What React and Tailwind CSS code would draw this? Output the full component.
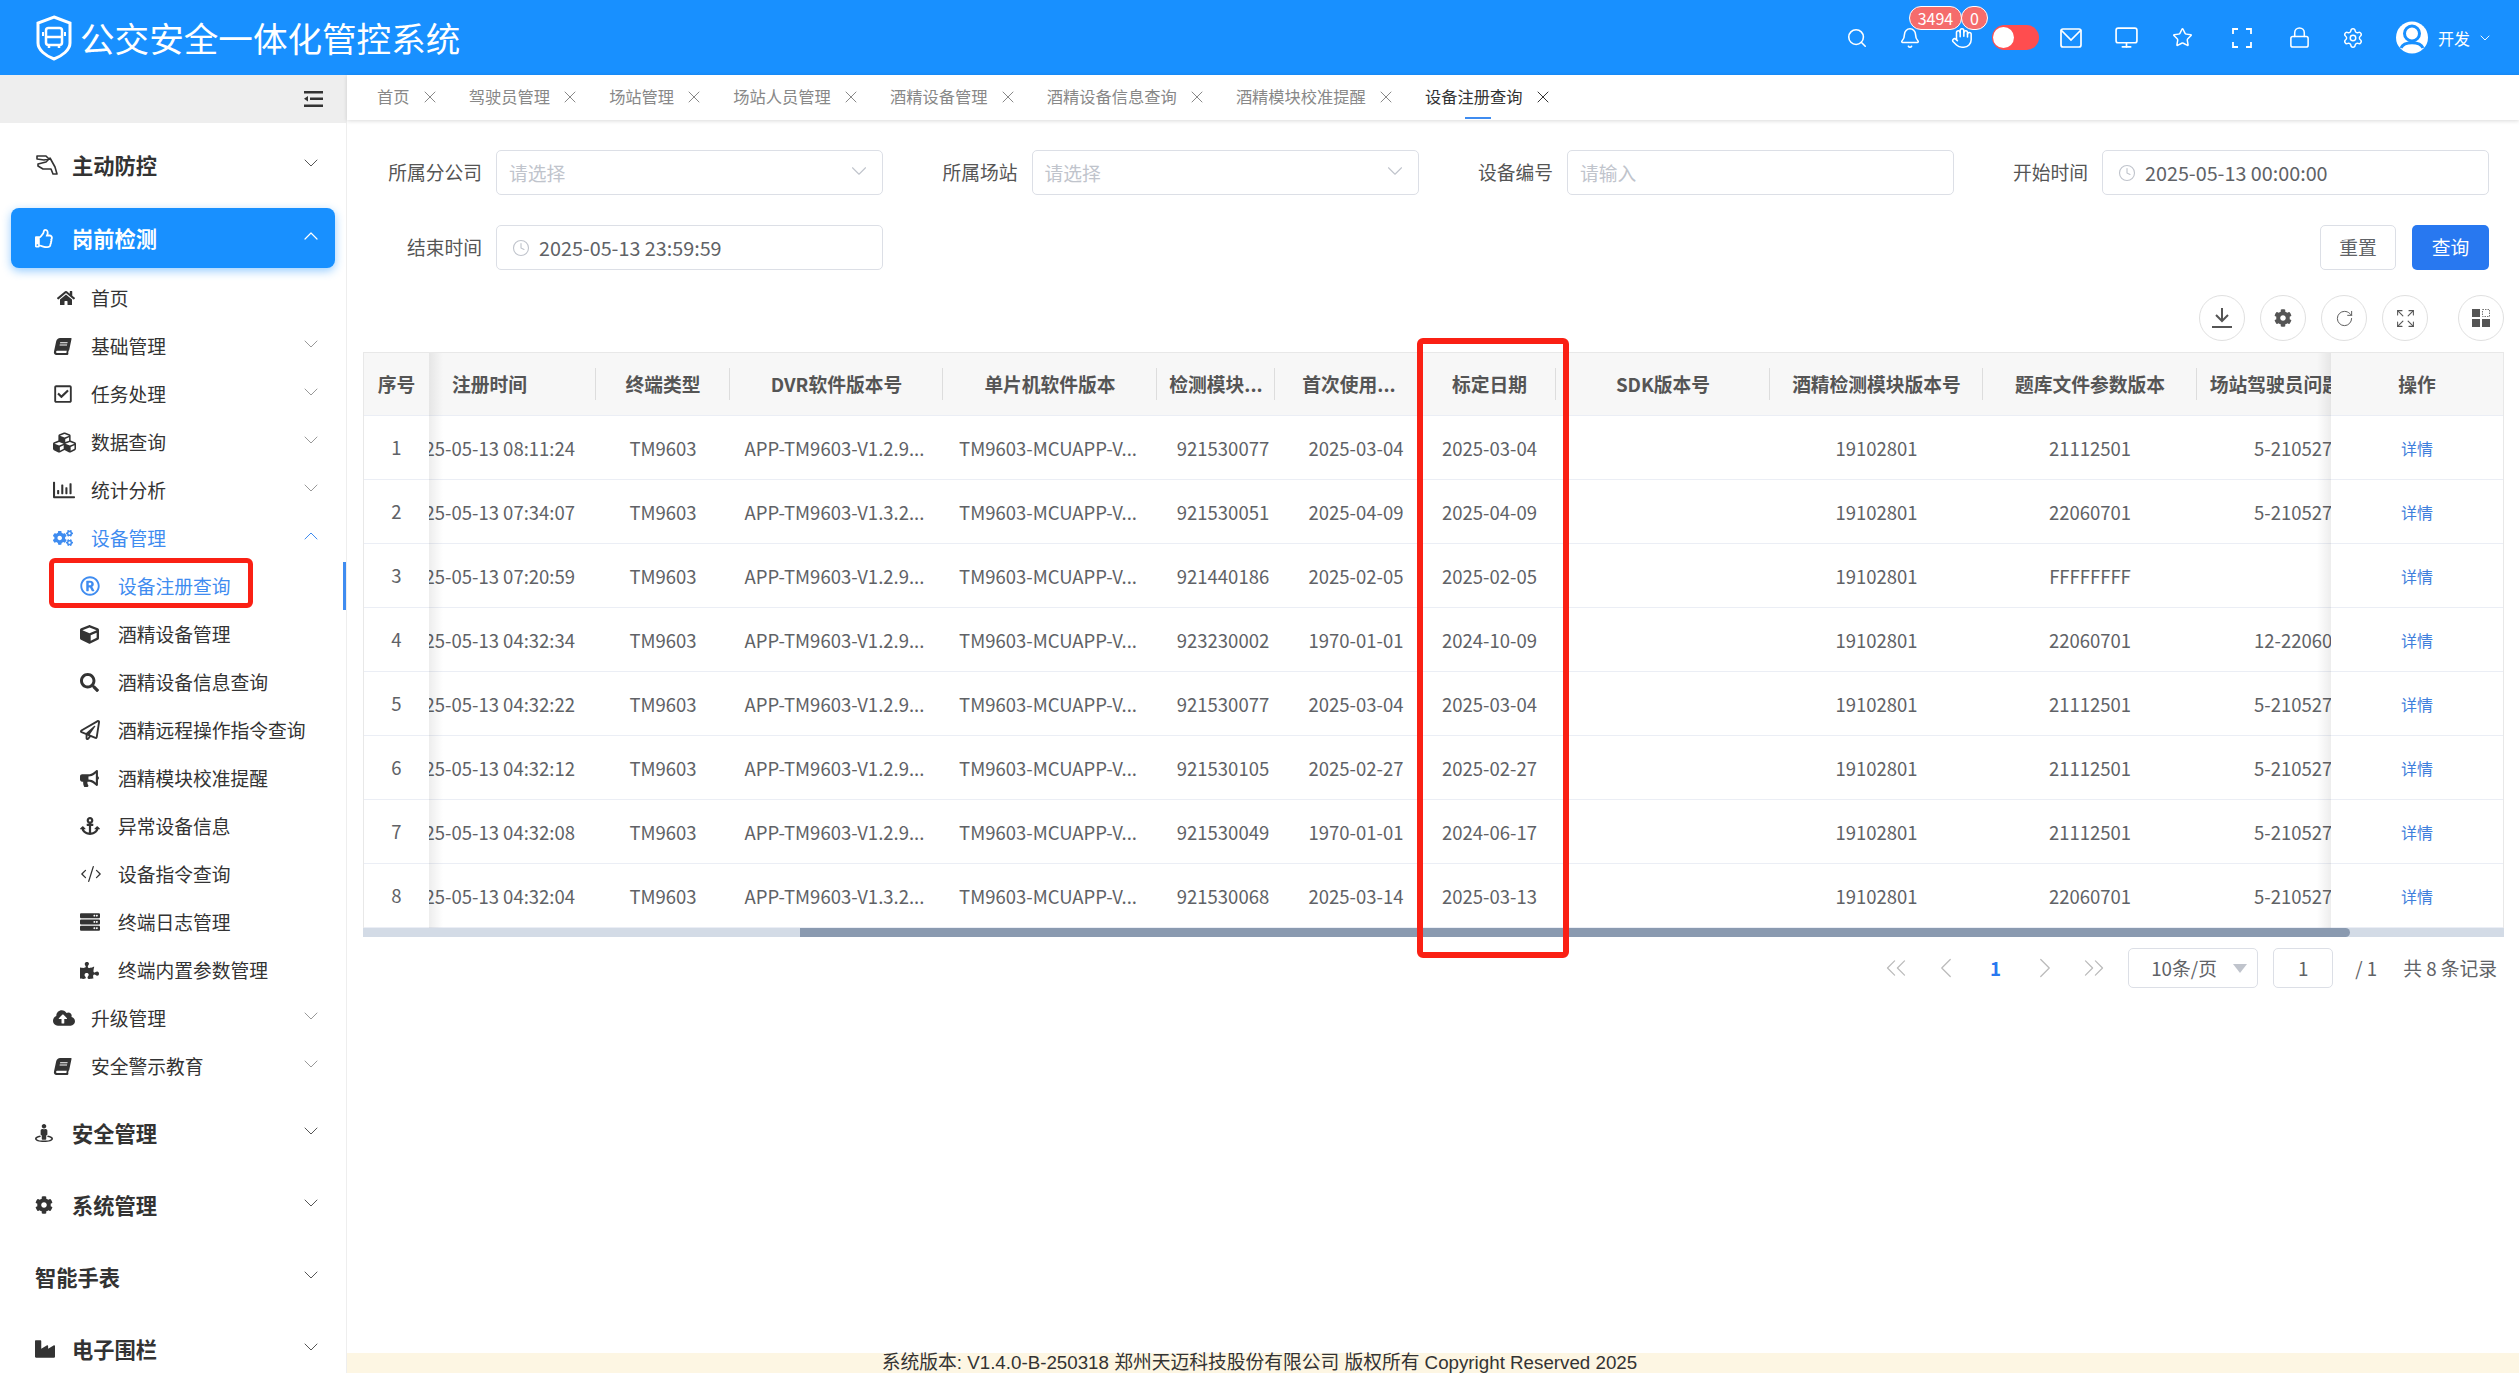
import React from 'react'
import {
  Search, Bell, Hand, Monitor, Star, Lock, Settings, ChevronDown, ChevronUp, X, Clock,
  RotateCw, Expand, ChevronsLeft, ChevronsRight, ChevronLeft, ChevronRight, CodeXml,
} from 'lucide-react'
import {
  FaHome, FaBook, FaRegCheckSquare, FaCubes, FaRegChartBar, FaCogs, FaRegRegistered, FaCube, FaSearch,
  FaRegPaperPlane, FaBullhorn, FaAnchor, FaServer, FaPuzzlePiece, FaCloudUploadAlt, FaIndustry,
  FaCog, FaStreetView, FaRegThumbsUp,
} from 'react-icons/fa'

const tabs = ['首页', '驾驶员管理', '场站管理', '场站人员管理', '酒精设备管理', '酒精设备信息查询', '酒精模块校准提醒', '设备注册查询']

const subMenu = [
  { icon: <FaHome size={18} className="ml-[4px]" />, label: '首页', level: 2, noArrow: true },
  { icon: <FaBook size={17} className="-skew-x-12 ml-[1px]" />, label: '基础管理', level: 2 },
  { icon: <FaRegCheckSquare size={20} />, label: '任务处理', level: 2 },
  { icon: <FaCubes size={23} />, label: '数据查询', level: 2 },
  { icon: <FaRegChartBar size={22} />, label: '统计分析', level: 2 },
  { icon: <FaCogs size={20} />, label: '设备管理', level: 2, open: true },
  { icon: <FaRegRegistered size={20} />, label: '设备注册查询', level: 3, active: true },
  { icon: <FaCube size={19} />, label: '酒精设备管理', level: 3 },
  { icon: <FaSearch size={19} />, label: '酒精设备信息查询', level: 3 },
  { icon: <FaRegPaperPlane size={20} />, label: '酒精远程操作指令查询', level: 3 },
  { icon: <FaBullhorn size={19} />, label: '酒精模块校准提醒', level: 3 },
  { icon: <FaAnchor size={20} />, label: '异常设备信息', level: 3 },
  { icon: <CodeXml size={22} strokeWidth={1.4} />, label: '设备指令查询', level: 3 },
  { icon: <FaServer size={20} />, label: '终端日志管理', level: 3 },
  { icon: <FaPuzzlePiece size={19} />, label: '终端内置参数管理', level: 3 },
  { icon: <FaCloudUploadAlt size={22} />, label: '升级管理', level: 2 },
  { icon: <FaBook size={17} className="-skew-x-12 ml-[1px]" />, label: '安全警示教育', level: 2 },
]

const headers = ['注册时间', '终端类型', 'DVR软件版本号', '单片机软件版本', '检测模块...', '首次使用...', '标定日期', 'SDK版本号', '酒精检测模块版本号', '题库文件参数版本', '场站驾驶员问题库版本']

const rows = [
  ['08:11:24', 'V1.2.9', '921530077', '2025-03-04', '2025-03-04', '21112501', '5-21052701'],
  ['07:34:07', 'V1.3.2', '921530051', '2025-04-09', '2025-04-09', '22060701', '5-21052701'],
  ['07:20:59', 'V1.2.9', '921440186', '2025-02-05', '2025-02-05', 'FFFFFFFF', ''],
  ['04:32:34', 'V1.2.9', '923230002', '1970-01-01', '2024-10-09', '22060701', '12-2206070'],
  ['04:32:22', 'V1.2.9', '921530077', '2025-03-04', '2025-03-04', '21112501', '5-21052701'],
  ['04:32:12', 'V1.2.9', '921530105', '2025-02-27', '2025-02-27', '21112501', '5-21052701'],
  ['04:32:08', 'V1.2.9', '921530049', '1970-01-01', '2024-06-17', '21112501', '5-21052701'],
  ['04:32:04', 'V1.3.2', '921530068', '2025-03-14', '2025-03-13', '22060701', '5-21052701'],
]

const gridCols = 'grid grid-cols-[213px_134px_213px_214px_118px_148px_133px_214px_213px_214px_213px] w-[2027px]'

const Logo = () => (
  <svg width="36" height="46" viewBox="0 0 36 46" fill="none" stroke="white" strokeWidth="3">
    <path d="M18 2 L34 8 V28 C34 35 26 41 18 44 C10 41 2 35 2 28 V8 Z" />
    <rect x="10" y="13" width="16" height="17" rx="2.5" strokeWidth="2.5" />
    <path d="M10 22 H26 M13 33 V30 M23 33 V30" strokeWidth="2.5" />
    <path d="M7 17 V21 M29 17 V21" strokeWidth="2" />
  </svg>
)

const PreventIcon = () => (
  <svg width="24" height="22" viewBox="0 0 24 22" fill="none" stroke="#333" strokeWidth="1.6" strokeLinejoin="round">
    <path d="M2 2 H11 L14 5 L9 6 L2 5 Z" />
    <path d="M3 10 L11 8 L15 4 L20 13 L22 20 H18 L16 15 H8 L3 12 Z" />
  </svg>
)

const MailIcon = () => (
  <svg width="24" height="22" viewBox="0 0 24 22" fill="none" stroke="white" strokeWidth="1.7">
    <rect x="2" y="2" width="20" height="18" rx="2" />
    <path d="M2 3 L12 13 L22 3" />
  </svg>
)

const FullIcon = () => (
  <svg width="20" height="20" viewBox="0 0 20 20" fill="none" stroke="white" strokeWidth="1.8">
    <path d="M1 6 V1 H6 M14 1 H19 V6 M19 14 V19 H14 M6 19 H1 V14" />
  </svg>
)

const AvatarIcon = () => (
  <svg width="32" height="33" viewBox="0 0 32 33">
    <circle cx="16" cy="16.5" r="16" fill="white" />
    <circle cx="16" cy="12.5" r="7.5" fill="none" stroke="#1890ff" strokeWidth="3" />
    <path d="M5 27 C8 20 24 20 27 27" fill="none" stroke="#1890ff" strokeWidth="3" />
  </svg>
)

const DownloadIcon = () => (
  <svg width="20" height="20" viewBox="0 0 20 20" fill="none" stroke="#555" strokeWidth="2">
    <path d="M10 0 V12 M4 7 L10 13 L16 7" />
    <path d="M0 19 H20" />
  </svg>
)

const LayoutIcon = () => (
  <svg width="18" height="18" viewBox="0 0 18 18" fill="#555">
    <rect x="0" y="0" width="8" height="8" />
    <rect x="10.5" y="0.5" width="7" height="7" fill="none" stroke="#777" strokeDasharray="1.5 1" />
    <rect x="0" y="10" width="8" height="8" />
    <rect x="10" y="10" width="8" height="8" />
  </svg>
)

const CollapseIcon = () => (
  <svg width="19" height="16" viewBox="0 0 19 16" fill="#333">
    <rect x="0" y="0" width="19" height="2.5" />
    <rect x="6" y="6.5" width="13" height="2.5" />
    <rect x="0" y="13.5" width="19" height="2.5" />
    <path d="M4 5 V10.5 L0 7.7 Z" />
  </svg>
)

const Group = ({ icon, label, active, open }) => (
  <div className="h-[72px] flex items-center">
    <div className={`w-[324px] ml-[11px] h-[60px] rounded-lg flex items-center pl-[24px] pr-[12px] ${active ? 'bg-[#1890ff] text-white shadow-[0_3px_10px_rgba(24,144,255,0.45)]' : 'text-[#333]'}`}>
      {icon && <span className="w-[37px] shrink-0 flex items-center">{icon}</span>}
      <span className="text-[21.25px] font-bold leading-none">{label}</span>
      {open
        ? <ChevronUp className="ml-auto -mt-1" size={24} strokeWidth={1.2} />
        : <ChevronDown className="ml-auto -mt-1 text-[#555]" size={24} strokeWidth={1} />}
    </div>
  </div>
)

const SubItem = ({ item }) => {
  const color = item.active || item.open ? 'text-[#3f8cf0]' : 'text-[#333]'
  const pad = item.level === 3 ? 'pl-[80px]' : 'pl-[53px]'
  return (
    <div className={`h-[48px] relative flex items-center pr-[23px] ${pad} ${color}`}>
      <span className="w-[38px] shrink-0 flex items-center">{item.icon}</span>
      <span className="text-[18.75px] leading-none whitespace-nowrap">{item.label}</span>
      {item.level === 2 && !item.noArrow && (item.open
        ? <ChevronUp className="ml-auto -mt-1 text-[#3f8cf0]" size={24} strokeWidth={1} />
        : <ChevronDown className="ml-auto -mt-1 text-[#999]" size={24} strokeWidth={1} />)}
      {item.active && (
        <>
          <div className="absolute right-0 top-0 bottom-0 w-[3px] bg-[#3f8cf0]" />
          <div className="absolute left-[49px] top-[-4px] w-[204px] h-[50px] border-[5px] border-[#fa2014] rounded-[6px]" />
        </>
      )}
    </div>
  )
}

const Field = ({ label, children }) => (
  <div className="flex items-center w-[535.5px]">
    <div className="w-[133px] shrink-0 text-right pr-[14px] text-[18.75px] text-[#555] leading-none whitespace-nowrap">{label}</div>
    {children}
  </div>
)

const Box = ({ children }) => (
  <div className="w-[387px] shrink-0 h-[45px] border border-[#dcdfe6] rounded-[5px] flex items-center px-[12px] bg-white">
    {children}
  </div>
)

const Select = () => (
  <Box>
    <span className="text-[#c0c4cc] text-[18.75px] mt-[2px]">请选择</span>
    <ChevronDown className="ml-auto -mt-1 -mr-[2px] text-[#c0c4cc]" size={26} strokeWidth={1} />
  </Box>
)

const DateBox = ({ value }) => (
  <Box>
    <Clock className="text-[#c0c4cc] ml-[3px] mr-[9px]" size={18} strokeWidth={1.5} />
    <span className="text-[#606266] text-[19.75px]">{value}</span>
  </Box>
)

const ToolBtn = ({ children, className = '' }) => (
  <div className={`w-[46px] h-[46px] rounded-full border border-[#e0e0e0] flex items-center justify-center ${className}`}>{children}</div>
)

const HeadCell = ({ children, sep = true }) => (
  <div className="h-[63px] relative flex items-center justify-center whitespace-nowrap overflow-hidden text-[18.75px] font-bold text-[#555]">
    {children}
    {sep && <div className="absolute right-0 top-[15px] h-[32px] w-px bg-[#ddd]" />}
  </div>
)

const Cell = ({ children, className = '' }) => (
  <div className={`h-[64px] pt-px flex items-center justify-center whitespace-nowrap overflow-hidden text-[18.5px] text-[#606266] ${className}`}>{children}</div>
)

export default function App() {
  return (
    <div className="w-[2519px] h-[1373px] overflow-hidden flex flex-col bg-white font-['Noto_Sans_CJK_SC','Noto_Sans',sans-serif]">
      {/* header */}
      <header className="h-[75px] shrink-0 bg-[#1890ff] flex items-center text-white pl-[36px] pr-[26px]">
        <Logo />
        <span className="ml-[8px] text-[34.6px] leading-none">公交安全一体化管控系统</span>
        <div className="ml-auto flex items-center">
          <div className="w-[54px] flex justify-center"><Search size={22} strokeWidth={1.7} /></div>
          <div className="w-[52px] flex justify-center relative">
            <Bell size={22} strokeWidth={1.7} />
            <span className="absolute left-[25px] top-[-21px] w-[53px] h-[24px] rounded-full bg-[#f56c6c] border border-white text-[16px] leading-none flex items-center justify-center">3494</span>
          </div>
          <div className="w-[52px] flex justify-center relative">
            <Hand size={22} strokeWidth={1.7} />
            <span className="absolute left-[25px] top-[-21px] w-[27px] h-[24px] rounded-full bg-[#f56c6c] border border-white text-[16px] leading-none flex items-center justify-center">0</span>
          </div>
          <div className="w-[56px] flex justify-center">
            <div className="w-[47px] h-[25px] rounded-full bg-[#ff4d4f] flex items-center pl-[1px]">
              <div className="w-[21px] h-[21px] rounded-full bg-white" />
            </div>
          </div>
          <div className="w-[55px] flex justify-center"><MailIcon /></div>
          <div className="w-[55px] flex justify-center"><Monitor size={25} strokeWidth={1.6} /></div>
          <div className="w-[57px] flex justify-center"><Star size={21} strokeWidth={1.7} /></div>
          <div className="w-[62px] flex justify-center"><FullIcon /></div>
          <div className="w-[53px] flex justify-center"><Lock size={23} strokeWidth={1.6} /></div>
          <div className="w-[54px] flex justify-center"><Settings size={22} strokeWidth={1.6} /></div>
          <div className="w-[52px] ml-[6px] flex justify-center"><AvatarIcon /></div>
          <span className="text-[16px] leading-none">开发</span>
          <ChevronDown className="ml-[7px]" size={16} strokeWidth={1.4} />
        </div>
      </header>

      <div className="flex-1 flex min-h-0">
        {/* sidebar */}
        <aside className="w-[347px] shrink-0 border-r border-[#eeeeee] bg-white overflow-hidden">
          <div className="h-[48px] bg-[#eeeeee] flex items-center justify-end pr-[23px]">
            <CollapseIcon />
          </div>
          <div className="pt-[6px]">
            <Group icon={<PreventIcon />} label="主动防控" />
            <div className="mt-px">
              <Group icon={<FaRegThumbsUp size={19} />} label="岗前检测" active open />
            </div>
            <div className="mb-[7px]">
              {subMenu.map((item) => <SubItem key={item.label} item={item} />)}
            </div>
            <Group icon={<FaStreetView size={18} />} label="安全管理" />
            <Group icon={<FaCog size={18} />} label="系统管理" />
            <Group label="智能手表" />
            <Group icon={<FaIndustry size={20} />} label="电子围栏" />
          </div>
        </aside>

        {/* main */}
        <main className="flex-1 min-w-0 flex flex-col">
          {/* tabs */}
          <div className="h-[45px] shrink-0 bg-white shadow-[0_1px_4px_rgba(0,0,0,0.15)] flex items-center pl-[30px] gap-[29.2px] text-[16.25px] text-[#888]">
            {tabs.map((t, i) => (
              <div key={t} className={`relative h-full flex items-center gap-[10px] pb-[2px] ${i === tabs.length - 1 ? 'text-[#333]' : ''}`}>
                <span className="leading-none">{t}</span>
                <X size={20} strokeWidth={1.2} />
                {i === tabs.length - 1 && <div className="absolute bottom-[1px] left-[40px] w-[26px] h-[2px] bg-[#3f8cf0]" />}
              </div>
            ))}
          </div>

          <div className="flex-1 min-h-0 relative pl-[16px] pr-[15px]">
            {/* filters */}
            <div className="pr-[15px]">
              <div className="flex pt-[30px]">
                <Field label="所属分公司"><Select /></Field>
                <Field label="所属场站"><Select /></Field>
                <Field label="设备编号"><Box><span className="text-[#c0c4cc] text-[18.75px] mt-[2px]">请输入</span></Box></Field>
                <div className="flex items-center ml-auto">
                  <div className="pr-[14px] text-[18.75px] text-[#555] leading-none whitespace-nowrap">开始时间</div>
                  <DateBox value="2025-05-13 00:00:00" />
                </div>
              </div>
              <div className="flex items-center mt-[30px]">
                <Field label="结束时间"><DateBox value="2025-05-13 23:59:59" /></Field>
                <div className="ml-auto flex gap-[16px] text-[18.75px]">
                  <div className="w-[76px] h-[45px] border border-[#dcdfe6] rounded-[5px] text-[#606266] flex items-center justify-center">重置</div>
                  <div className="w-[77px] h-[45px] bg-[#2878f0] rounded-[5px] text-white flex items-center justify-center">查询</div>
                </div>
              </div>
            </div>

            {/* tool buttons */}
            <div className="flex justify-end items-center mt-[25px] mb-[11px]">
              <ToolBtn><DownloadIcon /></ToolBtn>
              <ToolBtn className="ml-[15px]"><FaCog size={18} color="#555" /></ToolBtn>
              <ToolBtn className="ml-[15px]"><RotateCw size={19} strokeWidth={1.2} color="#555" /></ToolBtn>
              <ToolBtn className="ml-[15px]"><Expand size={21} strokeWidth={1.2} color="#555" /></ToolBtn>
              <ToolBtn className="ml-[30px]"><LayoutIcon /></ToolBtn>
            </div>

            {/* table */}
            <div className="relative border-t border-[#e8e8e8]">
              <div className="flex w-full">
                {/* fixed left */}
                <div className="w-[66px] shrink-0 relative z-10 bg-white border-l border-[#e8e8e8]">
                  <div className="h-[63px] bg-[#f7f7f7] flex items-center justify-center border-b border-[#ebeef5] text-[18.75px] font-bold text-[#555]">序号</div>
                  {rows.map((_, i) => (
                    <div key={i} className="h-[64px] pt-px flex items-center justify-center border-b border-[#ebeef5] text-[18.5px] text-[#606266]">{i + 1}</div>
                  ))}
                  <div className="absolute top-0 bottom-0 left-full w-[14px] bg-gradient-to-r from-[rgba(0,0,0,0.07)] to-transparent" />
                </div>

                {/* scrolling columns */}
                <div className="flex-1 min-w-0 overflow-hidden">
                  <div className="-ml-[46px] w-[2027px]">
                    <div className={`${gridCols} bg-[#f7f7f7] border-b border-[#ebeef5] h-[63px]`}>
                      {headers.map((h, i) => <HeadCell key={h} sep={i < headers.length - 1}>{h}</HeadCell>)}
                    </div>
                    {rows.map((r, i) => (
                      <div key={i} className={`${gridCols} border-b border-[#ebeef5] h-[64px]`}>
                        <Cell>2025-05-13 {r[0]}</Cell>
                        <Cell>TM9603</Cell>
                        <Cell className="pr-[4px]">APP-TM9603-{r[1]}...</Cell>
                        <Cell className="pr-[4px]">TM9603-MCUAPP-V...</Cell>
                        <Cell className="pl-[14px]">{r[2]}</Cell>
                        <Cell className="pl-[14px]">{r[3]}</Cell>
                        <Cell>{r[4]}</Cell>
                        <Cell />
                        <Cell>19102801</Cell>
                        <Cell>{r[5]}</Cell>
                        <Cell>{r[6]}</Cell>
                      </div>
                    ))}
                  </div>
                </div>

                {/* fixed right */}
                <div className="w-[173px] shrink-0 relative z-10 bg-white border-r border-[#e8e8e8]">
                  <div className="absolute top-0 bottom-0 right-full w-[14px] bg-gradient-to-l from-[rgba(0,0,0,0.07)] to-transparent" />
                  <div className="h-[63px] bg-[#f7f7f7] flex items-center justify-center border-b border-[#ebeef5] text-[18.75px] font-bold text-[#555]">操作</div>
                  {rows.map((_, i) => (
                    <div key={i} className="h-[64px] flex items-center justify-center border-b border-[#ebeef5] text-[16px] text-[#3f7fdc]">详情</div>
                  ))}
                </div>
              </div>

              {/* scrollbar */}
              <div className="h-[9px] bg-[#d3dbe6] relative z-20">
                <div className="h-full ml-[437px] w-[1550px] bg-[#8a9ab0] rounded-r-full" />
              </div>

              {/* red annotation over the date column */}
              <div className="absolute z-30 left-[1054px] top-[-15px] w-[152px] h-[620px] border-[6px] border-[#fa2014] rounded-[6px]" />
            </div>

            {/* pagination */}
            <div className="flex justify-end items-center mt-[11px] h-[40px] text-[#606266] text-[18.75px]">
              <div className="w-[49.5px] flex justify-center"><ChevronsLeft size={34} strokeWidth={0.9} className="text-[#bbb]" /></div>
              <div className="w-[49.5px] flex justify-center"><ChevronLeft size={34} strokeWidth={0.9} className="text-[#bbb]" /></div>
              <div className="w-[49.5px] flex justify-center text-[#2878f0] font-bold">1</div>
              <div className="w-[49.5px] flex justify-center"><ChevronRight size={34} strokeWidth={0.9} className="text-[#bbb]" /></div>
              <div className="w-[49.5px] flex justify-center"><ChevronsRight size={34} strokeWidth={0.9} className="text-[#bbb]" /></div>
              <div className="w-[130px] h-[40px] ml-[9px] border border-[#dcdfe6] rounded-[5px] flex items-center pl-[22px] pr-[10px] whitespace-nowrap">
                10条/页
                <span className="ml-auto w-0 h-0 border-x-[7px] border-x-transparent border-t-[9px] border-t-[#c0c4cc]" />
              </div>
              <div className="w-[60px] h-[40px] ml-[15px] border border-[#dcdfe6] rounded-[5px] flex items-center justify-center">1</div>
              <span className="ml-[22px] whitespace-nowrap">/ 1</span>
              <span className="ml-[26px] mr-[7px] whitespace-nowrap">共 8 条记录</span>
            </div>
          </div>

          {/* footer */}
          <div className="h-[20px] shrink-0 bg-[#fdf6e3] flex items-center justify-center pr-[347px] text-[18.75px] text-[#333] font-['Liberation_Sans','Noto_Sans_CJK_SC',sans-serif] leading-none whitespace-nowrap">
            系统版本: V1.4.0-B-250318 郑州天迈科技股份有限公司 版权所有 Copyright Reserved 2025
          </div>
        </main>
      </div>
    </div>
  )
}
